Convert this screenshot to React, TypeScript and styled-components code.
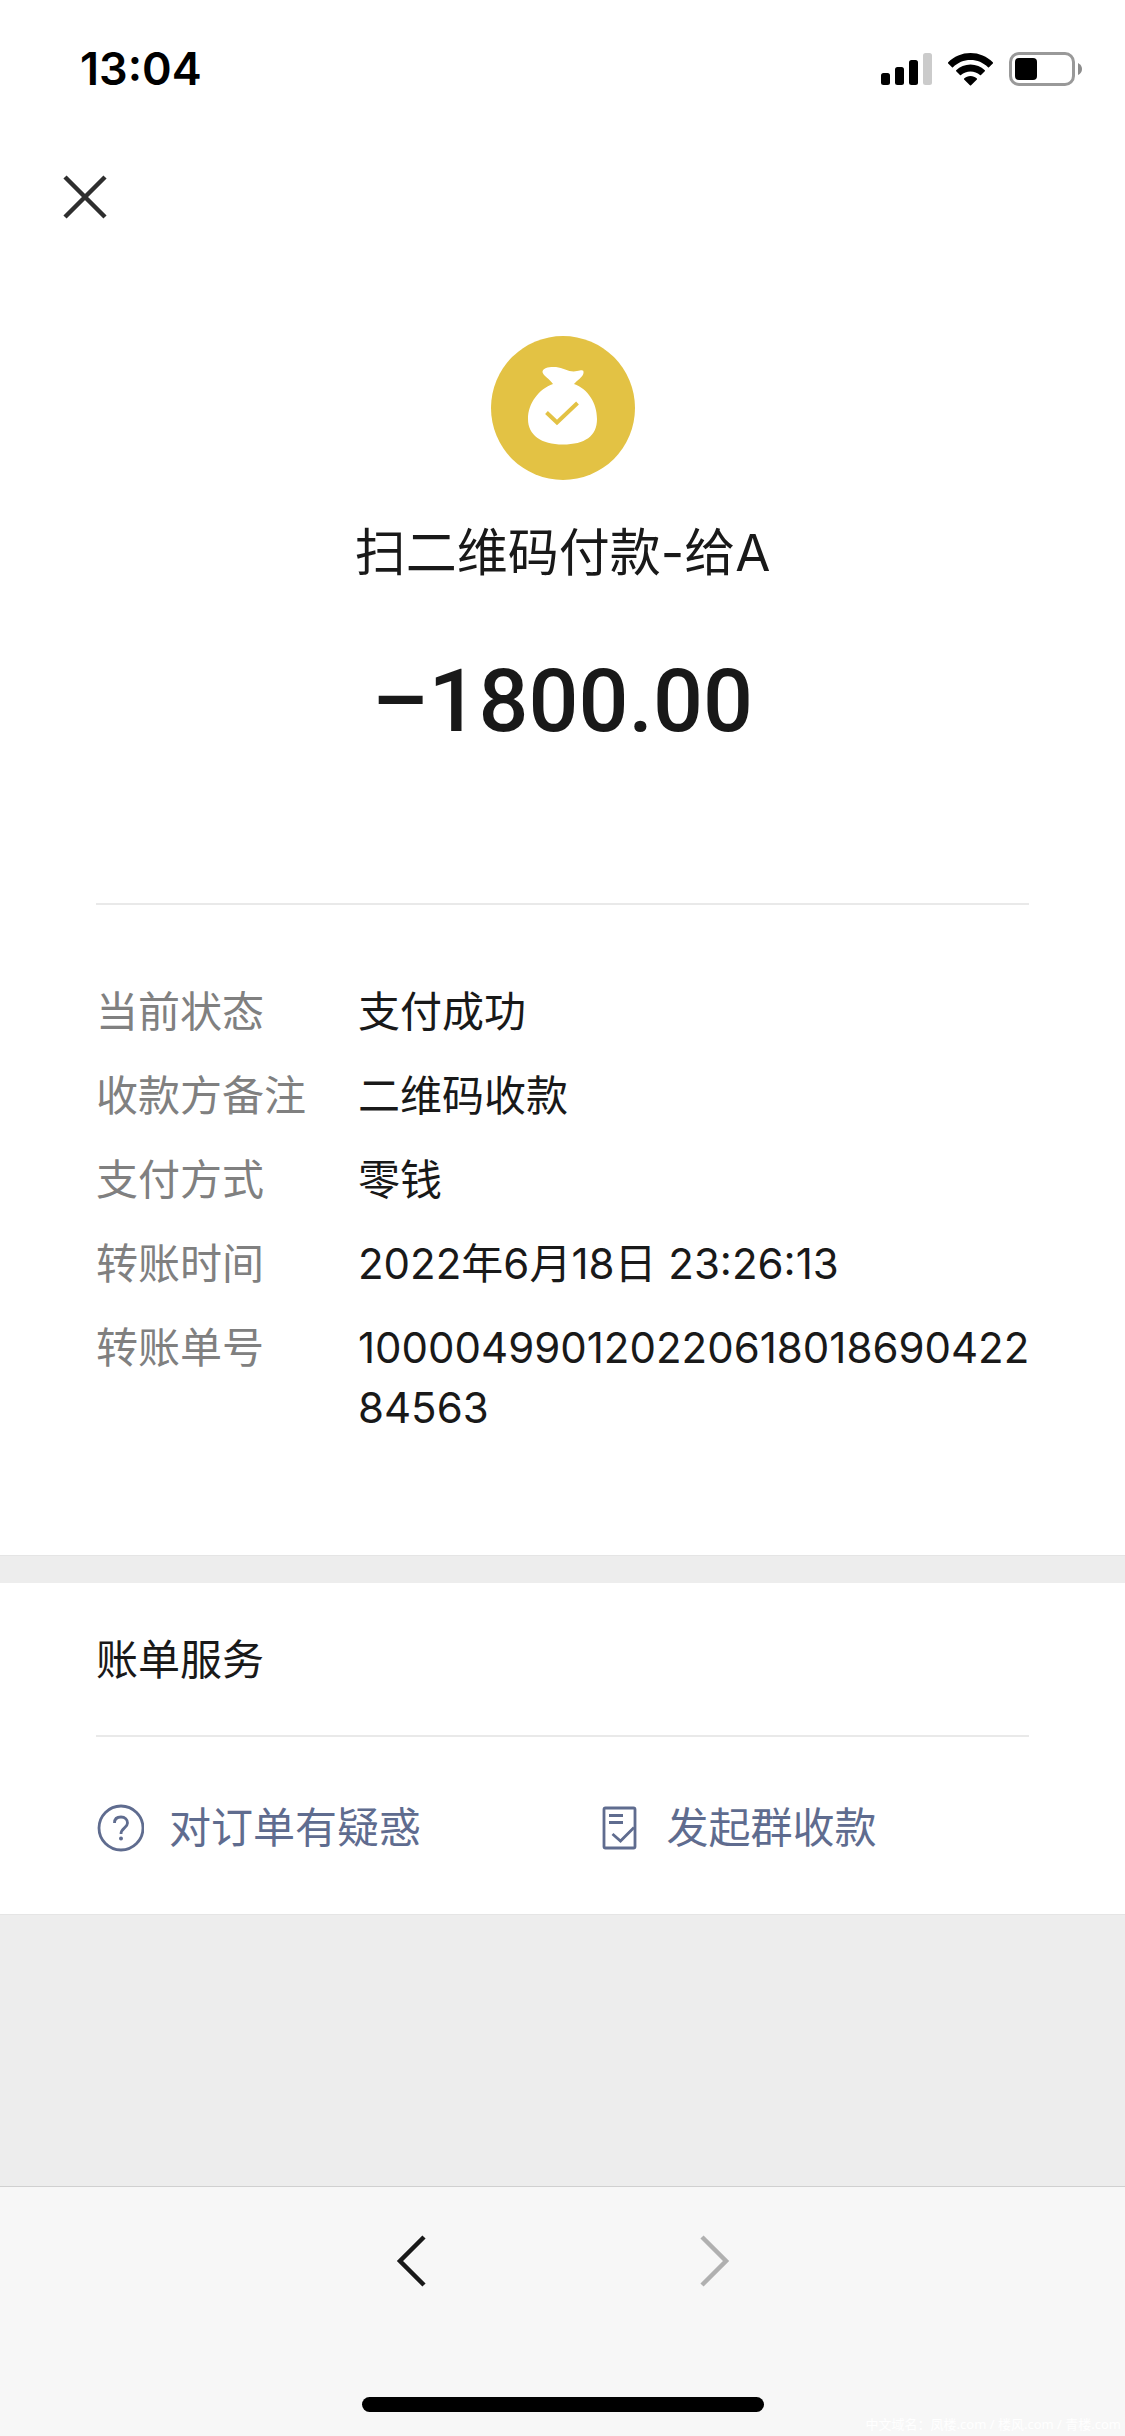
import React from "react";
import styled, { createGlobalStyle } from "styled-components";

const ink = "#191919";
const muted = "#808080";
const link = "#5f6c8f";
const line = "#e5e5e5";

const GlobalStyle = createGlobalStyle`
  * { box-sizing: border-box; }
  body {
    margin: 0;
    background: #fff;
    color: ${ink};
    font-family: Inter, "Noto Sans CJK SC", sans-serif;
    font-size: 42px;
    line-height: 60px;
  }
  button { font: inherit; color: inherit; background: none; border: 0; padding: 0; cursor: pointer; }
  svg { display: block; }
`;

const Page = styled.div`
  display: flex;
  flex-direction: column;
  min-height: 100vh;
`;

const StatusBar = styled.header`
  display: flex;
  align-items: center;
  justify-content: space-between;
  height: 138px;
  padding: 0 42px 0 80px;
`;

const Clock = styled.time`
  color: #000;
  font-size: 45px;
  font-weight: 600;
`;

const StatusIcons = styled.div`
  display: flex;
  align-items: center;
  gap: 16px;
`;

const TitleBar = styled.nav`
  display: flex;
  align-items: center;
  height: 118px;
  padding: 0 60px;
`;

const IconButton = styled.button<{ $tone?: string }>`
  display: flex;
  color: ${(p) => p.$tone ?? ink};
`;

const Summary = styled.section`
  display: flex;
  flex-direction: column;
  align-items: center;
  padding: 80px 96px 152px;
`;

const Payee = styled.h1`
  margin: 37px 0 0;
  font-size: 51px;
  font-weight: 400;
  line-height: 72px;
`;

const Amount = styled.p`
  margin: 62px 0 0;
  font-family: Roboto, sans-serif;
  font-size: 88px;
  font-weight: 500;
  line-height: 100px;
`;

const Divider = styled.hr`
  width: auto;
  height: 2px;
  margin: 0 96px;
  border: 0;
  background: #e9e9e9;
`;

const Details = styled.dl`
  display: grid;
  grid-template-columns: 262px 1fr;
  row-gap: 24px;
  margin: 0;
  padding: 77px 92px 117px 96px;
`;

const Term = styled.dt`
  color: ${muted};
`;

const Value = styled.dd`
  margin: 0;
  overflow-wrap: anywhere;
`;

const Band = styled.div<{ $grow?: boolean }>`
  flex: ${(p) => (p.$grow ? "1 0 28px" : "0 0 28px")};
  border-top: 1px solid ${line};
  background: #ededed;
`;

const SectionTitle = styled.h2`
  margin: 0;
  padding: 47px 96px 45px;
  font-size: 42px;
  font-weight: 400;
`;

const Services = styled.div`
  display: grid;
  grid-template-columns: 8fr 7fr;
  padding: 61px 96px 56px;
`;

const ServiceButton = styled.button`
  display: flex;
  align-items: center;
  gap: 25px;
  color: ${link};
`;

const BottomBar = styled.footer`
  position: relative;
  display: flex;
  flex-direction: column;
  align-items: center;
  justify-content: space-between;
  height: 250px;
  padding: 44px 0 24px;
  border-top: 1px solid #d0d0d0;
  background: #f7f7f7;
`;

const History = styled.div`
  display: flex;
  gap: 242px;
`;

const HomeIndicator = styled.div`
  width: 402px;
  height: 15px;
  border-radius: 8px;
  background: #000;
`;

const Footnote = styled.small`
  position: absolute;
  right: 4px;
  bottom: 2px;
  color: #fff;
  font-family: "Noto Sans", "Noto Sans CJK SC", sans-serif;
  font-size: 13px;
  line-height: 20px;
`;

const Signal = () => (
  <svg width="51" height="33" viewBox="0 0 51 33" aria-label="信号">
    <rect x="0" y="20" width="9" height="12" rx="2.5" />
    <rect x="14" y="14" width="9" height="18" rx="2.5" />
    <rect x="28" y="7" width="9" height="25" rx="2.5" />
    <rect x="42" y="0" width="9" height="32" rx="2.5" fill="#cbcbcb" />
  </svg>
);

const Wifi = () => (
  <svg width="45" height="33" viewBox="0 0 45 33" aria-label="Wi-Fi">
    <path d="M22.5 0C31 0 39 3.400 45 9.400Q45.300 10 44.800 10.500L41 14.200Q40.500 14.600 40 14.200C35.300 9.600 29.200 7 22.500 7S9.700 9.600 5 14.200Q4.500 14.600 4 14.200L.2 10.500Q-.3 10 0 9.400C6 3.400 14 0 22.500 0Z" />
    <path d="M22.500 11.500C28 11.500 33 13.600 36.800 17.200Q37.300 17.800 36.800 18.300L33 22Q32.500 22.500 32 22C29.400 19.700 26.100 18.400 22.500 18.400S15.600 19.700 13 22Q12.500 22.500 12 22L8.200 18.300Q7.700 17.800 8.200 17.200C12 13.600 17 11.500 22.500 11.500Z" />
    <path d="M22.500 23C25 23 27.200 23.900 28.900 25.400Q29.300 26 28.900 26.500L23.100 32.300Q22.500 32.900 21.900 32.300L16.100 26.500Q15.700 26 16.100 25.400C17.800 23.900 20 23 22.500 23Z" />
  </svg>
);

const Battery = () => (
  <svg width="74" height="34" viewBox="0 0 74 34" aria-label="电量">
    <rect x="1.500" y="1.500" width="63" height="31" rx="8.500" fill="none" stroke="#999" strokeWidth="3" />
    <rect x="6" y="6" width="22" height="22" rx="4" />
    <path d="M69 11Q73 13 73 17T69 23Z" fill="#8c8c8c" />
  </svg>
);

const Close = () => (
  <svg width="50" height="50" viewBox="0 0 50 50" fill="none" stroke="currentColor" strokeWidth="4.500">
    <path d="M5 5L45 45M45 5L5 45" />
  </svg>
);

const MoneyBag = () => (
  <svg width="144" height="144" viewBox="0 0 144 144" aria-hidden="true">
    <circle cx="72" cy="72" r="72" fill="#e3c244" />
    <path
      fill="#fff"
      d="M62 48C59 43 51 39 51.500 35.500C52 31.500 59 30.500 65 31C73 32 79 37 86 35C91 34 93 33.500 92.500 37C92 41 86 44.500 83 48C97 53 106 67 106 83C106 100 94 108.500 72 108.500S37 99 37 83C37 67 48 53 62 48Z"
    />
    <path d="M55.500 76.500L66 86.500L86.500 67" fill="none" stroke="#e3c244" strokeWidth="4" />
  </svg>
);

const Question = () => (
  <svg width="48" height="48" viewBox="0 0 48 48" fill="none" stroke="currentColor" strokeWidth="2.800">
    <circle cx="25" cy="24" r="22" />
    <path d="M18.500 19C18.500 15 21 13 25 13S31.500 15.500 31.500 19C31.500 24 25 24 25 30" />
    <circle cx="25" cy="34.500" r="2" fill="currentColor" stroke="none" />
  </svg>
);

const Bill = () => (
  <svg width="48" height="48" viewBox="0 0 48 48" fill="none" stroke="currentColor" strokeWidth="2.800">
    <rect x="10" y="4" width="31" height="40" rx="1.500" />
    <path d="M15 11.500H29M15 18.500H29M18.500 30L26.500 37L40 23.500" />
  </svg>
);

const Chevron = ({ direction }: { direction: "left" | "right" }) => (
  <svg width="60" height="60" viewBox="0 0 60 60" fill="none" stroke="currentColor" strokeWidth="4.500">
    <path d={direction === "left" ? "M42 6L18 30L42 54" : "M18 6L42 30L18 54"} />
  </svg>
);

const details = [
  { term: "当前状态", value: "支付成功" },
  { term: "收款方备注", value: "二维码收款" },
  { term: "支付方式", value: "零钱" },
  { term: "转账时间", value: "2022年6月18日 23:26:13" },
  { term: "转账单号", value: "10000499012022061801869042284563" },
];

export default function App() {
  return (
    <Page>
      <GlobalStyle />
      <StatusBar>
        <Clock>13:04</Clock>
        <StatusIcons>
          <Signal />
          <Wifi />
          <Battery />
        </StatusIcons>
      </StatusBar>
      <TitleBar>
        <IconButton aria-label="关闭" $tone="#2e2e2e">
          <Close />
        </IconButton>
      </TitleBar>
      <main>
        <Summary>
          <MoneyBag />
          <Payee>扫二维码付款-给A</Payee>
          <Amount>–1800.00</Amount>
        </Summary>
        <Divider />
        <Details>
          {details.map(({ term, value }) => (
            <React.Fragment key={term}>
              <Term>{term}</Term>
              <Value>{value}</Value>
            </React.Fragment>
          ))}
        </Details>
      </main>
      <Band />
      <section>
        <SectionTitle>账单服务</SectionTitle>
        <Divider />
        <Services>
          <ServiceButton>
            <Question />
            对订单有疑惑
          </ServiceButton>
          <ServiceButton>
            <Bill />
            发起群收款
          </ServiceButton>
        </Services>
      </section>
      <Band $grow />
      <BottomBar>
        <History>
          <IconButton aria-label="后退">
            <Chevron direction="left" />
          </IconButton>
          <IconButton aria-label="前进" $tone="#b0b0b0">
            <Chevron direction="right" />
          </IconButton>
        </History>
        <HomeIndicator />
        <Footnote>中文域名：凤楼.com / 楼风.com / 青楼.com</Footnote>
      </BottomBar>
    </Page>
  );
}
